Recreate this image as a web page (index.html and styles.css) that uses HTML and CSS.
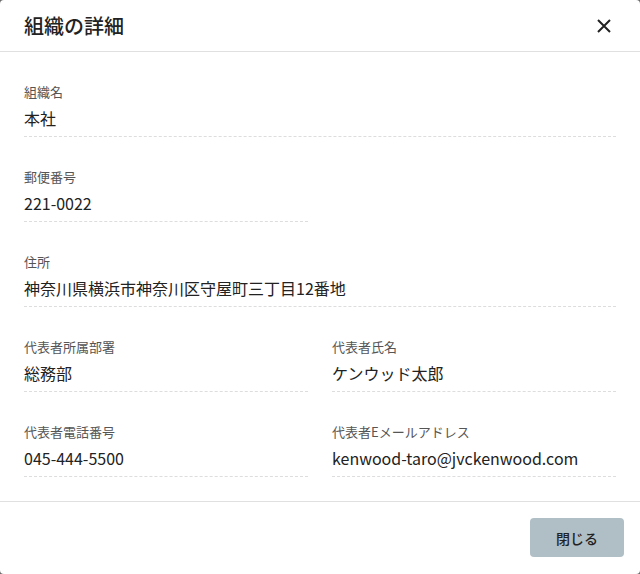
FILE: index.html
```html
<!DOCTYPE html>
<html lang="ja">
<head>
  <meta charset="UTF-8">
  <title>組織の詳細</title>
  <link rel="stylesheet" href="styles.css">
</head>
<body>
  <!-- Organization detail dialog -->
  <div class="dialog">
    <div class="dialog-header">
      <h2 class="dialog-title">組織の詳細</h2>
      <button class="close-btn" aria-label="閉じる">
        <svg width="14" height="14" viewBox="0 0 14 14">
          <path d="M1 1L13 13M13 1L1 13" stroke="#222" stroke-width="2" fill="none"/>
        </svg>
      </button>
    </div>

    <div class="dialog-body">
      <div class="field full">
        <div class="field-label">組織名</div>
        <div class="field-value">本社</div>
      </div>
      <div class="field">
        <div class="field-label">郵便番号</div>
        <div class="field-value">221-0022</div>
      </div>
      <div class="field full">
        <div class="field-label">住所</div>
        <div class="field-value">神奈川県横浜市神奈川区守屋町三丁目12番地</div>
      </div>
      <div class="field">
        <div class="field-label">代表者所属部署</div>
        <div class="field-value">総務部</div>
      </div>
      <div class="field">
        <div class="field-label">代表者氏名</div>
        <div class="field-value">ケンウッド太郎</div>
      </div>
      <div class="field">
        <div class="field-label">代表者電話番号</div>
        <div class="field-value">045-444-5500</div>
      </div>
      <div class="field">
        <div class="field-label">代表者Eメールアドレス</div>
        <div class="field-value">kenwood-taro@jvckenwood.com</div>
      </div>
    </div>

    <div class="dialog-footer">
      <button class="btn-close">閉じる</button>
    </div>
  </div>
</body>
</html>
```

FILE: styles.css
```css
/* Basic reset */
* {
  box-sizing: border-box;
}
body {
  margin: 0;
  background: #6b6b6b;
  font-family: "Noto Sans CJK JP", "Noto Sans", sans-serif;
  color: #222;
}
/* Dialog shell */
.dialog {
  width: 640px;
  height: 574px;
  background: #fff;
  border-radius: 4px;
  display: flex;
  flex-direction: column;
}
.dialog-header {
  flex-shrink: 0;
  height: 52px;
  padding: 0 24px;
  border-bottom: 1px solid #e0e0e0;
  display: flex;
  align-items: center;
  justify-content: space-between;
}
.dialog-title {
  margin: 0;
  font-size: 20px;
  font-weight: 500;
  line-height: 26px;
}
.close-btn {
  border: none;
  background: none;
  padding: 0;
  margin-right: 5px;
  width: 14px;
  height: 14px;
  display: flex;
  cursor: pointer;
}
/* Detail fields */
.dialog-body {
  padding: 30px 24px 24px;
  display: grid;
  grid-template-columns: 1fr 1fr;
  column-gap: 24px;
  row-gap: 30px;
}
.field.full {
  grid-column: 1 / 3;
}
.field-label {
  font-size: 13px;
  line-height: 20px;
  color: #555;
  margin-bottom: 4px;
}
.field-value {
  font-size: 16px;
  line-height: 24px;
  padding-bottom: 6px;
  border-bottom: 1px dashed #ddd;
}
/* Footer */
.dialog-footer {
  flex-shrink: 0;
  border-top: 1px solid #e0e0e0;
  padding: 16px;
  display: flex;
  justify-content: flex-end;
}
.btn-close {
  width: 94px;
  height: 39px;
  border: none;
  border-radius: 4px;
  background: #b0bec5;
  color: #222;
  font-family: inherit;
  font-size: 14px;
  font-weight: 500;
  cursor: pointer;
}
```
